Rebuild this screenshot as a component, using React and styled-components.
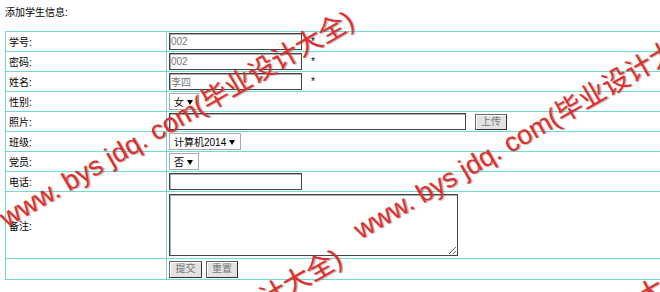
import React from 'react';
import styled, { createGlobalStyle } from 'styled-components';

const GlobalStyle = createGlobalStyle`
    html, body {
        margin: 0;
        padding: 0;
        background: #fff;
        overflow: hidden;
    }
    body {
        font-family: "Liberation Sans", "Noto Sans CJK SC", sans-serif;
        font-size: 10px;
        color: #000;
    }
`;

const Page = styled.div`
    position: relative;
    width: 660px;
    height: 292px;
    overflow: hidden;
    padding: 5px 0 0 5px;
    box-sizing: border-box;
`;

const Title = styled.div`
    height: 16px;
    line-height: 16px;
    margin-bottom: 10px;
`;

const FormTable = styled.table`
    border-collapse: collapse;
    width: 760px;
    border: 1px solid #72d9d9;
    td {
        border: 1px solid #72d9d9;
        padding: 0;
        vertical-align: middle;
        white-space: nowrap;
    }
`;

const Label = styled.td`
    width: 157px;
    padding-left: 3px !important;
    height: ${p => p.$h || 19}px;
`;

const Value = styled.td`
    padding-left: 2px !important;
    height: ${p => p.$h || 19}px;
`;

const Field = styled.input`
    box-sizing: border-box;
    width: ${p => p.$w || 133}px;
    height: 17px;
    margin: 0;
    padding: 0 1px;
    border: 1px solid #444;
    box-shadow: inset 1px 1px 0 #b0b0b0;
    font: 10px "Liberation Sans", "Noto Sans CJK SC", sans-serif;
    color: #777;
    background: #fff;
    vertical-align: middle;
`;

const Star = styled.span`
    margin-left: 9px;
    vertical-align: middle;
`;

const Select = styled.span`
    display: inline-flex;
    align-items: center;
    justify-content: space-between;
    box-sizing: border-box;
    width: ${p => p.$w}px;
    height: 17px;
    padding: 0 5px 0 4px;
    border: 1px solid #a9a9a9;
    background: #fff;
    vertical-align: middle;
    font-size: 10px;
`;

const Arrow = styled.span`
    width: 0;
    height: 0;
    border-left: 3px solid transparent;
    border-right: 3px solid transparent;
    border-top: 5px solid #000;
    margin-top: 1px;
`;

const GrayButton = styled.button`
    box-sizing: border-box;
    height: ${p => p.$h || 17}px;
    width: ${p => p.$w || 33}px;
    padding: 0;
    margin: 0;
    margin-left: ${p => p.$gap || 0}px;
    border: 1px solid #666;
    border-right-color: #333;
    border-bottom-color: #333;
    background: #e2e2e2;
    box-shadow: inset 1px 1px 0 #fff;
    color: #777;
    font: 10px "Liberation Sans", "Noto Sans CJK SC", sans-serif;
    vertical-align: middle;
    line-height: 14px;
`;

const Notes = styled.textarea`
    display: block;
    box-sizing: border-box;
    width: 289px;
    height: 62px;
    margin: 2px 0;
    border: 1px solid #444;
    box-shadow: inset 1px 1px 0 #b0b0b0;
    resize: both;
    font: 10px "Liberation Sans", "Noto Sans CJK SC", sans-serif;
`;

const Overlay = styled.div`
    position: absolute;
    inset: 0;
    pointer-events: none;
`;

const Mark = styled.span`
    position: absolute;
    left: ${p => p.$x}px;
    top: ${p => p.$y - 16}px;
    height: 32px;
    line-height: 32px;
    transform-origin: 0 50%;
    transform: rotate(-30deg);
    white-space: nowrap;
    font-family: "Liberation Sans", "Noto Sans CJK SC", sans-serif;
    font-size: 27px;
    color: #dc2f2f;
    text-shadow: 1px 1px 1px rgba(90, 60, 60, 0.45);
`;

const marks = [
    [2, 220],
    [356, 232],
    [-10, 458],
    [344, 470]
];

export default function App() {
    return (
        <>
            <GlobalStyle />
            <Page>
                <Title>添加学生信息:</Title>
                <FormTable>
                    <tbody>
                        <tr>
                            <Label>学号:</Label>
                            <Value>
                                <Field defaultValue="002" readOnly />
                                <Star>*</Star>
                            </Value>
                        </tr>
                        <tr>
                            <Label>密码:</Label>
                            <Value>
                                <Field defaultValue="002" readOnly />
                                <Star>*</Star>
                            </Value>
                        </tr>
                        <tr>
                            <Label>姓名:</Label>
                            <Value>
                                <Field defaultValue="李四" readOnly />
                                <Star>*</Star>
                            </Value>
                        </tr>
                        <tr>
                            <Label>性别:</Label>
                            <Value>
                                <Select $w={30}>女<Arrow /></Select>
                            </Value>
                        </tr>
                        <tr>
                            <Label>照片:</Label>
                            <Value>
                                <Field $w={297} readOnly />
                                <GrayButton $gap={9} $h={16} $w={32}>上传</GrayButton>
                            </Value>
                        </tr>
                        <tr>
                            <Label>班级:</Label>
                            <Value>
                                <Select $w={72}>计算机2014<Arrow /></Select>
                            </Value>
                        </tr>
                        <tr>
                            <Label>党员:</Label>
                            <Value>
                                <Select $w={30}>否<Arrow /></Select>
                            </Value>
                        </tr>
                        <tr>
                            <Label>电话:</Label>
                            <Value>
                                <Field readOnly />
                            </Value>
                        </tr>
                        <tr>
                            <Label $h={65}>备注:</Label>
                            <Value $h={65}>
                                <Notes />
                            </Value>
                        </tr>
                        <tr>
                            <Label $h={20}></Label>
                            <Value $h={20}>
                                <GrayButton>提交</GrayButton>
                                <GrayButton $gap={4} $w={32}>重置</GrayButton>
                            </Value>
                        </tr>
                    </tbody>
                </FormTable>
                <Overlay>
                    {marks.map(([x, y], i) => (
                        <Mark key={i} $x={x} $y={y}>www. bys jdq. com(毕业设计大全)</Mark>
                    ))}
                </Overlay>
            </Page>
        </>
    );
}
